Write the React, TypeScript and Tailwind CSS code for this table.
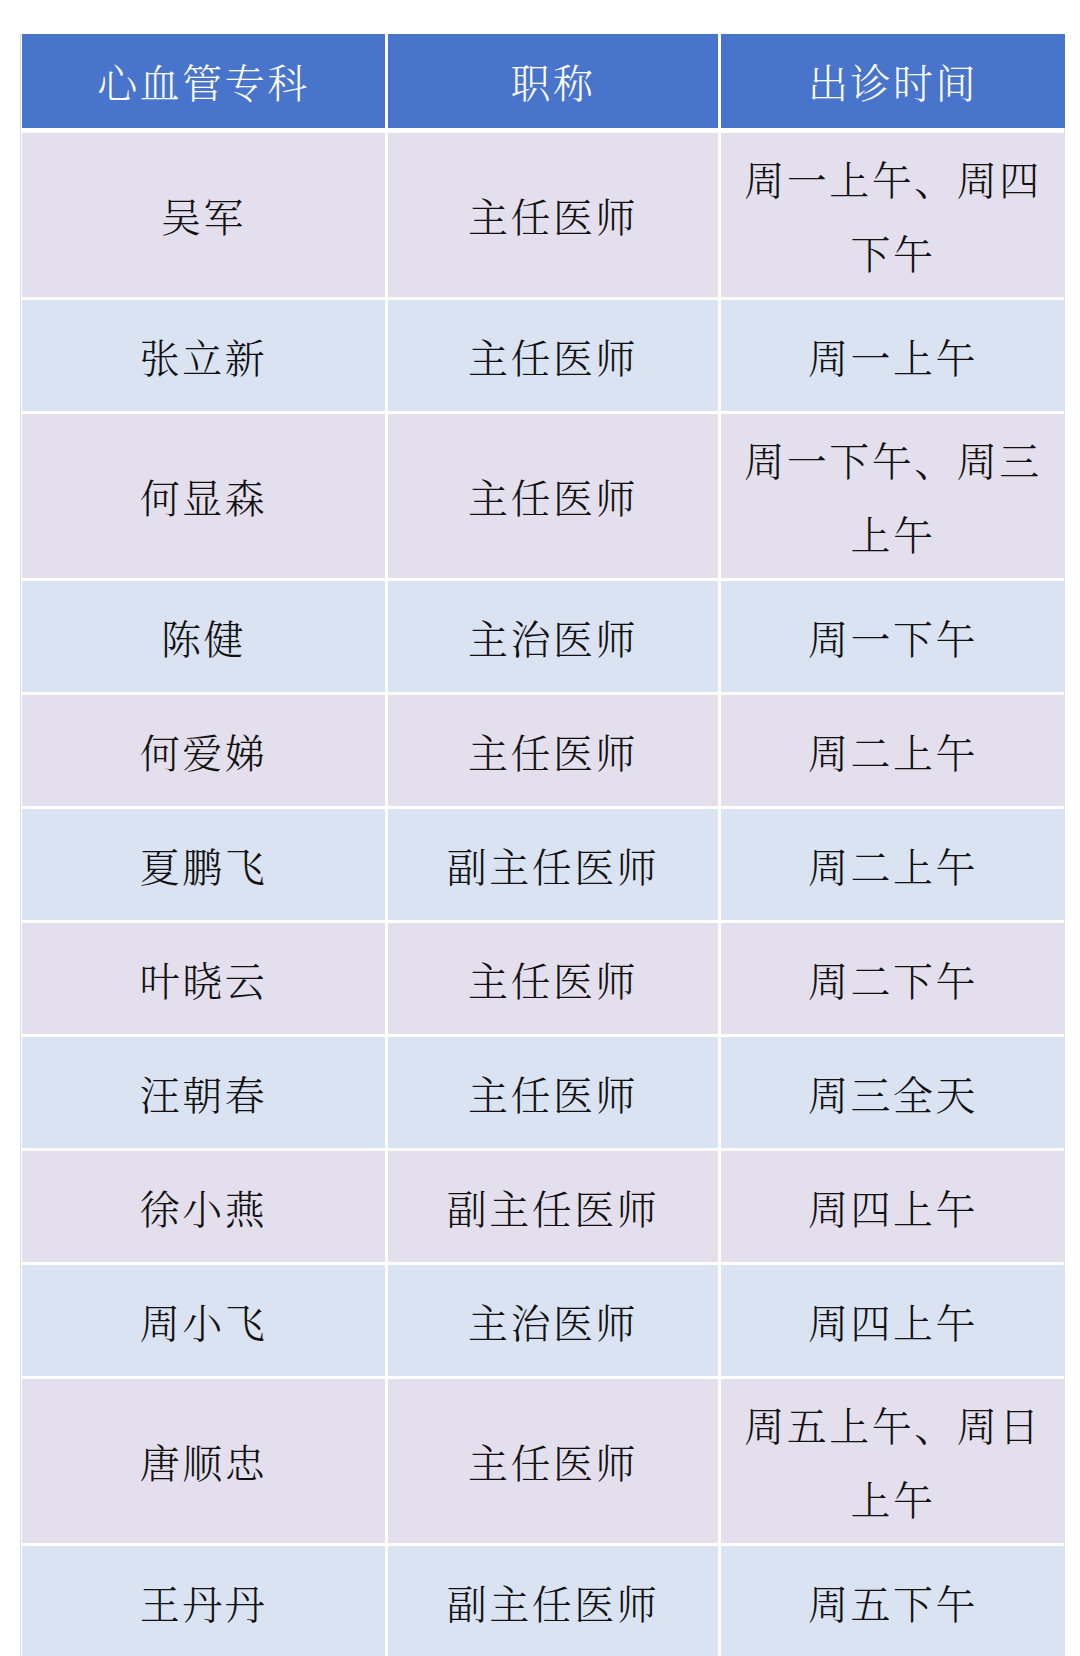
import React from 'react';

type Row = { name: string; title: string; time: string; tall?: boolean };

const rows: Row[] = [
  { name: '吴军', title: '主任医师', time: '周一上午、周四下午', tall: true },
  { name: '张立新', title: '主任医师', time: '周一上午' },
  { name: '何显森', title: '主任医师', time: '周一下午、周三上午', tall: true },
  { name: '陈健', title: '主治医师', time: '周一下午' },
  { name: '何爱娣', title: '主任医师', time: '周二上午' },
  { name: '夏鹏飞', title: '副主任医师', time: '周二上午' },
  { name: '叶晓云', title: '主任医师', time: '周二下午' },
  { name: '汪朝春', title: '主任医师', time: '周三全天' },
  { name: '徐小燕', title: '副主任医师', time: '周四上午' },
  { name: '周小飞', title: '主治医师', time: '周四上午' },
  { name: '唐顺忠', title: '主任医师', time: '周五上午、周日上午', tall: true },
  { name: '王丹丹', title: '副主任医师', time: '周五下午' },
];

const font = {
  fontFamily: '"Noto Serif CJK SC", "Noto Sans CJK SC", "Liberation Serif", serif',
};

function Cell({ children, bg, tall }: { children: React.ReactNode; bg: string; tall?: boolean }) {
  return (
    <div
      className={`flex items-center justify-center px-[16px] text-center text-[40px] leading-[74px] tracking-[2.5px] font-light text-[#111111] ${bg} ${
        tall ? 'h-[164px]' : 'h-[111px]'
      }`}
    >
      <span>{children}</span>
    </div>
  );
}

export default function App() {
  return (
    <div className="min-h-screen bg-white pt-[34px] pl-[20px]" style={font}>
      <div className="w-[1045px] border-l border-r border-[#d3dff0] pl-[1px] pr-[1px]">
        {/* Header */}
        <div className="grid grid-cols-[363px_330px_344px] gap-x-[3px] mb-[5px]">
          {['心血管专科', '职称', '出诊时间'].map((h) => (
            <div
              key={h}
              className="flex h-[94px] items-center justify-center bg-[#4874CB] text-[40px] tracking-[2.5px] font-light text-white"
            >
              {h}
            </div>
          ))}
        </div>

        {/* Body */}
        <div className="flex flex-col gap-y-[3px]">
          {rows.map((r, i) => {
            const bg = i % 2 === 0 ? 'bg-[#E4DFEC]' : 'bg-[#DAE3F1]';
            return (
              <div key={i} className="grid grid-cols-[363px_330px_344px] gap-x-[3px]">
                <Cell bg={bg} tall={r.tall}>{r.name}</Cell>
                <Cell bg={bg} tall={r.tall}>{r.title}</Cell>
                <Cell bg={bg} tall={r.tall}>{r.time}</Cell>
              </div>
            );
          })}
        </div>
      </div>
    </div>
  );
}
